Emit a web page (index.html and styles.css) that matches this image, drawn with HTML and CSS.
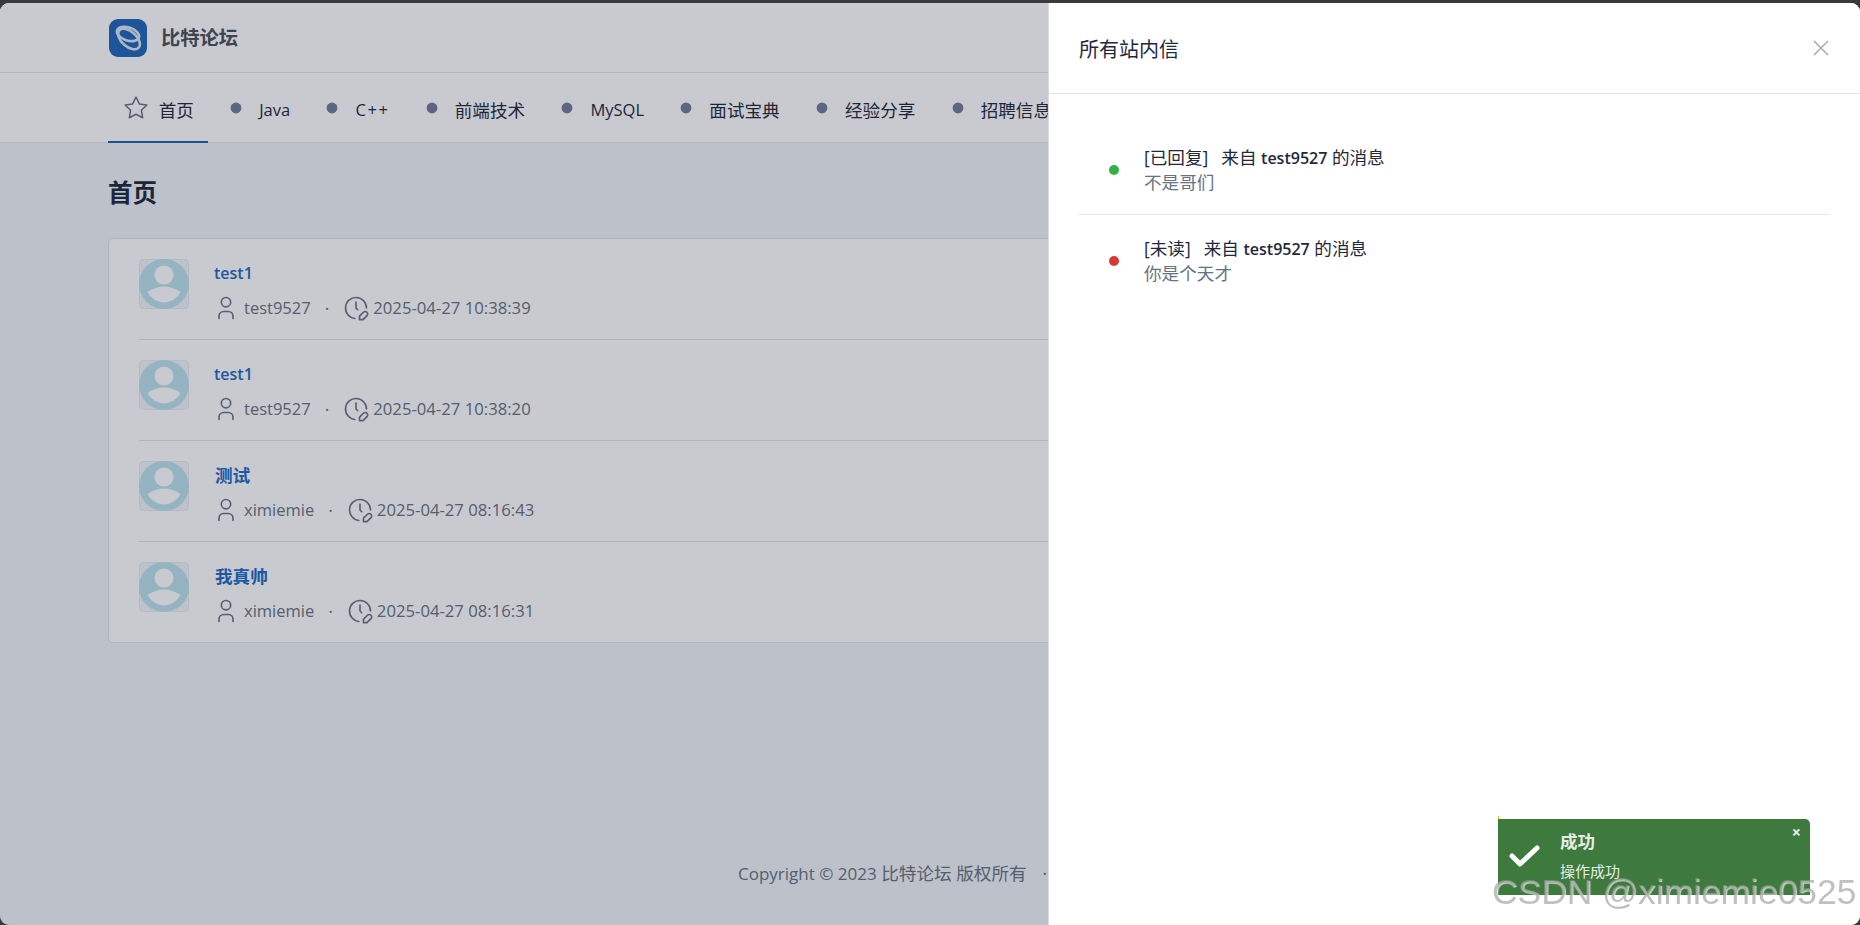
FILE: index.html
```html
<!DOCTYPE html>
<html lang="zh-CN">
<head>
<meta charset="utf-8">
<title>比特论坛</title>
<link rel="stylesheet" href="styles.css">
</head>
<body>
<div class="app">
  <header class="topbar">
    <div class="brand">
      <svg class="logo" viewBox="0 0 38 38"><rect width="38" height="38" rx="9" fill="#2066ba"/><g fill="none" stroke="#dbe6f2" stroke-width="2.6"><ellipse cx="19" cy="15" rx="11.5" ry="6.5" transform="rotate(18 19 15)"/><ellipse cx="20" cy="20" rx="13" ry="7.5" transform="rotate(42 20 20)"/></g></svg>
      <span class="brand-name">比特论坛</span>
    </div>
  </header>
  <nav class="nav">
    <a class="nav-item active"><svg class="icon" viewBox="0 0 24 24"><path d="M12 17.75l-6.172 3.245l1.179 -6.873l-5 -4.867l6.9 -1l3.086 -6.253l3.086 6.253l6.9 1l-5 4.867l1.179 6.873z"/></svg><span>首页</span></a>
    <a class="nav-item"><svg class="icon" viewBox="0 0 24 24"><circle class="solid" cx="12" cy="12" r="5"/></svg><span class="lat">Java</span></a>
    <a class="nav-item"><svg class="icon" viewBox="0 0 24 24"><circle class="solid" cx="12" cy="12" r="5"/></svg><span class="lat plus">C++</span></a>
    <a class="nav-item"><svg class="icon" viewBox="0 0 24 24"><circle class="solid" cx="12" cy="12" r="5"/></svg><span>前端技术</span></a>
    <a class="nav-item"><svg class="icon" viewBox="0 0 24 24"><circle class="solid" cx="12" cy="12" r="5"/></svg><span class="lat">MySQL</span></a>
    <a class="nav-item"><svg class="icon" viewBox="0 0 24 24"><circle class="solid" cx="12" cy="12" r="5"/></svg><span>面试宝典</span></a>
    <a class="nav-item"><svg class="icon" viewBox="0 0 24 24"><circle class="solid" cx="12" cy="12" r="5"/></svg><span>经验分享</span></a>
    <a class="nav-item"><svg class="icon" viewBox="0 0 24 24"><circle class="solid" cx="12" cy="12" r="5"/></svg><span>招聘信息</span></a>
  </nav>
  <main class="main">
    <h1 class="page-title">首页</h1>
    <section class="card">
      <article class="row">
        <svg class="avatar" viewBox="0 0 50 50"><rect class="av-bg" x=".5" y=".5" width="49" height="49" rx="4"/><circle class="av-ring" cx="25" cy="25" r="25"/><circle class="av-fg" cx="25" cy="16" r="9.5"/><path class="av-fg" d="M8.5 33Q25 22 41.5 33A18.3 18.3 0 0 1 8.5 33Z"/></svg>
        <div class="row-body">
          <a class="row-title lat">test1</a>
          <div class="meta"><svg class="icon user" viewBox="0 0 24 24"><path d="M8 7a4 4 0 1 0 8 0a4 4 0 0 0 -8 0"/><path d="M6 21v-2a4 4 0 0 1 4 -4h4a4 4 0 0 1 4 4v2"/></svg><span class="lat">test9527</span><span class="sep">·</span><svg class="icon clock" viewBox="0 0 24 24"><path d="M21 12a9 9 0 1 0 -9.972 8.948"/><path d="M12 7v5l1.5 1.5"/><path d="M18.42 15.61a2.1 2.1 0 1 1 2.97 2.97l-3.39 3.42h-3v-3z"/></svg><span class="date">2025-04-27 10:38:39</span></div>
        </div>
      </article>
      <article class="row">
        <svg class="avatar" viewBox="0 0 50 50"><rect class="av-bg" x=".5" y=".5" width="49" height="49" rx="4"/><circle class="av-ring" cx="25" cy="25" r="25"/><circle class="av-fg" cx="25" cy="16" r="9.5"/><path class="av-fg" d="M8.5 33Q25 22 41.5 33A18.3 18.3 0 0 1 8.5 33Z"/></svg>
        <div class="row-body">
          <a class="row-title lat">test1</a>
          <div class="meta"><svg class="icon user" viewBox="0 0 24 24"><path d="M8 7a4 4 0 1 0 8 0a4 4 0 0 0 -8 0"/><path d="M6 21v-2a4 4 0 0 1 4 -4h4a4 4 0 0 1 4 4v2"/></svg><span class="lat">test9527</span><span class="sep">·</span><svg class="icon clock" viewBox="0 0 24 24"><path d="M21 12a9 9 0 1 0 -9.972 8.948"/><path d="M12 7v5l1.5 1.5"/><path d="M18.42 15.61a2.1 2.1 0 1 1 2.97 2.97l-3.39 3.42h-3v-3z"/></svg><span class="date">2025-04-27 10:38:20</span></div>
        </div>
      </article>
      <article class="row">
        <svg class="avatar" viewBox="0 0 50 50"><rect class="av-bg" x=".5" y=".5" width="49" height="49" rx="4"/><circle class="av-ring" cx="25" cy="25" r="25"/><circle class="av-fg" cx="25" cy="16" r="9.5"/><path class="av-fg" d="M8.5 33Q25 22 41.5 33A18.3 18.3 0 0 1 8.5 33Z"/></svg>
        <div class="row-body">
          <a class="row-title">测试</a>
          <div class="meta"><svg class="icon user" viewBox="0 0 24 24"><path d="M8 7a4 4 0 1 0 8 0a4 4 0 0 0 -8 0"/><path d="M6 21v-2a4 4 0 0 1 4 -4h4a4 4 0 0 1 4 4v2"/></svg><span class="lat">ximiemie</span><span class="sep">·</span><svg class="icon clock" viewBox="0 0 24 24"><path d="M21 12a9 9 0 1 0 -9.972 8.948"/><path d="M12 7v5l1.5 1.5"/><path d="M18.42 15.61a2.1 2.1 0 1 1 2.97 2.97l-3.39 3.42h-3v-3z"/></svg><span class="date">2025-04-27 08:16:43</span></div>
        </div>
      </article>
      <article class="row">
        <svg class="avatar" viewBox="0 0 50 50"><rect class="av-bg" x=".5" y=".5" width="49" height="49" rx="4"/><circle class="av-ring" cx="25" cy="25" r="25"/><circle class="av-fg" cx="25" cy="16" r="9.5"/><path class="av-fg" d="M8.5 33Q25 22 41.5 33A18.3 18.3 0 0 1 8.5 33Z"/></svg>
        <div class="row-body">
          <a class="row-title">我真帅</a>
          <div class="meta"><svg class="icon user" viewBox="0 0 24 24"><path d="M8 7a4 4 0 1 0 8 0a4 4 0 0 0 -8 0"/><path d="M6 21v-2a4 4 0 0 1 4 -4h4a4 4 0 0 1 4 4v2"/></svg><span class="lat">ximiemie</span><span class="sep">·</span><svg class="icon clock" viewBox="0 0 24 24"><path d="M21 12a9 9 0 1 0 -9.972 8.948"/><path d="M12 7v5l1.5 1.5"/><path d="M18.42 15.61a2.1 2.1 0 1 1 2.97 2.97l-3.39 3.42h-3v-3z"/></svg><span class="date">2025-04-27 08:16:31</span></div>
        </div>
      </article>
    </section>
  </main>
  <footer class="footer"><span class="footer-lat">Copyright © 2023</span> 比特论坛 版权所有<span class="footer-sep">·</span></footer>
</div>

<div class="backdrop"></div>

<aside class="drawer">
  <div class="drawer-head">
    <h2 class="drawer-title">所有站内信</h2>
    <svg class="close" viewBox="0 0 16 16"><path d="M1 1L15 15M15 1L1 15"/></svg>
  </div>
  <div class="drawer-body">
    <div class="msg">
      <span class="status green"></span>
      <div>
        <div class="msg-title"><span class="tag">[已回复]</span>来自 <b class="lat-bold">test9527</b> 的消息</div>
        <div class="msg-sub">不是哥们</div>
      </div>
    </div>
    <div class="msg">
      <span class="status red"></span>
      <div>
        <div class="msg-title"><span class="tag">[未读]</span>来自 <b class="lat-bold">test9527</b> 的消息</div>
        <div class="msg-sub">你是个天才</div>
      </div>
    </div>
  </div>
</aside>

<div class="toast">
  <svg class="toast-check" viewBox="0 0 32 24"><path d="M3 12L11 20L28 4"/></svg>
  <div class="toast-text">
    <div class="toast-title">成功</div>
    <div class="toast-sub">操作成功</div>
  </div>
  <span class="toast-close">×</span>
</div>
<div class="watermark">CSDN @ximiemie0525</div>
</body>
</html>
```
FILE: styles.css
```css
* { box-sizing: border-box; }
html, body { height: 100%; margin: 0; overflow: hidden; }
body {
  background: #3a3a3a;
  padding-top: 3px;
  font-family: "Open Sans", "Noto Sans CJK SC", sans-serif;
  font-size: 17.6px;
  line-height: 24px;
  color: #1e293b;
}
.lat { font-size: 16.5px; }
.date { font-size: 16.7px; }
.plus { letter-spacing: 1.6px; }
.app {
  height: 922px;
  display: flex;
  flex-direction: column;
  background: #f0f4f8;
  border-radius: 9px;
  overflow: hidden;
}
.topbar {
  height: 70px;
  flex: none;
  background: #fff;
  border-bottom: 1px solid #e6e7e9;
  padding: 16px 0 0 109px;
}
.brand { display: flex; align-items: center; gap: 14px; height: 38px; }
.logo { width: 38px; height: 38px; flex: none; }
.brand-name { font-size: 19.3px; font-weight: 700; color: #4c5058; }
.nav {
  height: 70px;
  flex: none;
  display: flex;
  padding-left: 108px;
  background: #fff;
  border-bottom: 1px solid #e6e7e9;
}
.nav-item {
  display: flex;
  align-items: center;
  gap: 10px;
  padding: 0 14.65px;
  height: 70px;
  color: #1e293b;
  white-space: nowrap;
}
.nav-item span { margin-top: 3px; }
.nav-item.active { border-bottom: 2px solid #2060b0; padding-top: 2px; }
.nav-item .icon { width: 26px; height: 26px; }
.icon {
  width: 28px;
  height: 28px;
  flex: none;
  fill: none;
  stroke: #697389;
  stroke-width: 1.4;
  stroke-linecap: round;
  stroke-linejoin: round;
}
.solid { fill: #717d98; stroke: none; }
.main { padding: 35px 0 0 108px; width: 1752px; }
.page-title { margin: 0 0 30px; font-size: 24.5px; line-height: 30px; font-weight: 700; color: #1e293b; }
.card {
  background: #fff;
  border: 1px solid #dfe3e8;
  border-radius: 5px;
  padding: 0 30px;
}
.row {
  display: flex;
  gap: 26px;
  padding: 20px 0 19px;
  border-bottom: 1px solid #dfe3e8;
}
.row:last-child { border-bottom: 0; }
.avatar { width: 50px; height: 50px; flex: none; }
.av-bg { fill: #f1f5f9; stroke: #e6eaf0; }
.av-ring { fill: #bce3ef; }
.av-fg { fill: #fff; }
.row-body { padding-top: 2px; }
.row-title { display: block; font-weight: 600; color: #206bc4; height: 24px; }
.row-title.lat { font-size: 16px; margin-left: -1px; }
.meta {
  display: flex;
  align-items: center;
  margin-top: 11px;
  color: #667382;
  height: 24px;
}
.meta .user { margin: 0 4px 0 -3px; }
.meta .clock { margin-right: 3px; }
.sep { margin: 0 13px 0 14px; }
.footer {
  margin-top: auto;
  padding: 0 0 39px 738px;
  color: #667382;
  white-space: nowrap;
}
.footer-lat { font-size: 17px; }
.footer-sep { margin-left: 16px; }

.backdrop {
  position: fixed;
  inset: 3px 0 0 0;
  background: rgba(24, 30, 52, .235);
  border-radius: 9px;
}
.drawer {
  position: fixed;
  top: 3px;
  right: 0;
  bottom: 0;
  width: 812px;
  background: #fff;
  border-left: 1px solid #d8dadf;
  border-radius: 0 9px 9px 0;
}
.drawer-head {
  height: 91px;
  display: flex;
  align-items: center;
  justify-content: space-between;
  padding: 0 31px 0 30px;
  border-bottom: 1px solid #e6e7e9;
}
.drawer-title { margin: 0; padding-top: 3px; font-size: 20px; font-weight: 400; color: #1e293b; }
.close { width: 16px; height: 16px; fill: none; stroke: #aaa; stroke-width: 1.5; }
.drawer-body { padding: 30px 30px 0; }
.msg {
  display: flex;
  align-items: center;
  gap: 25px;
  padding: 21px 0 19px 30px;
  border-bottom: 1px solid #e6e7e9;
}
.msg:last-child { border-bottom: 0; }
.status { width: 10px; height: 10px; border-radius: 50%; flex: none; }
.green { background: #2fb344; }
.red { background: #d63939; }
.msg-title { line-height: 25px; }
.lat-bold { font-size: 16px; font-weight: 600; line-height: 1; }
.tag { margin-right: 13px; }
.msg-sub { line-height: 25px; color: #667382; }

.toast {
  position: fixed;
  left: 1498px;
  top: 819px;
  width: 312px;
  height: 76px;
  background: #3e793e;
  border-radius: 0 5px 0 0;
  color: #fff;
}
.toast::before {
  content: "";
  position: absolute;
  left: 0;
  top: -3px;
  width: 1px;
  height: 3px;
  background: #c8d400;
}
.toast-check {
  position: absolute;
  left: 11px;
  top: 25px;
  width: 32px;
  height: 24px;
  fill: none;
  stroke: #fff;
  stroke-width: 5;
  stroke-linecap: round;
  stroke-linejoin: round;
}
.toast-text { position: absolute; left: 62px; top: 9px; }
.toast-title { font-size: 17.5px; line-height: 26px; font-weight: 700; color: #e4efe4; }
.toast-sub { font-size: 15px; line-height: 20px; margin-top: 7px; color: #e4efe4; }
.toast-close { position: absolute; right: 9px; top: 0; font-size: 16px; font-weight: 700; line-height: 26px; color: #e8f0e8; }
.watermark {
  position: fixed;
  left: 1492px;
  top: 872px;
  font-family: "Liberation Sans", sans-serif;
  font-size: 35.4px;
  line-height: 40px;
  white-space: nowrap;
  color: rgba(150, 150, 150, .6);
  text-shadow: 1px 1px 1px rgba(255, 255, 255, .7);
}
```
